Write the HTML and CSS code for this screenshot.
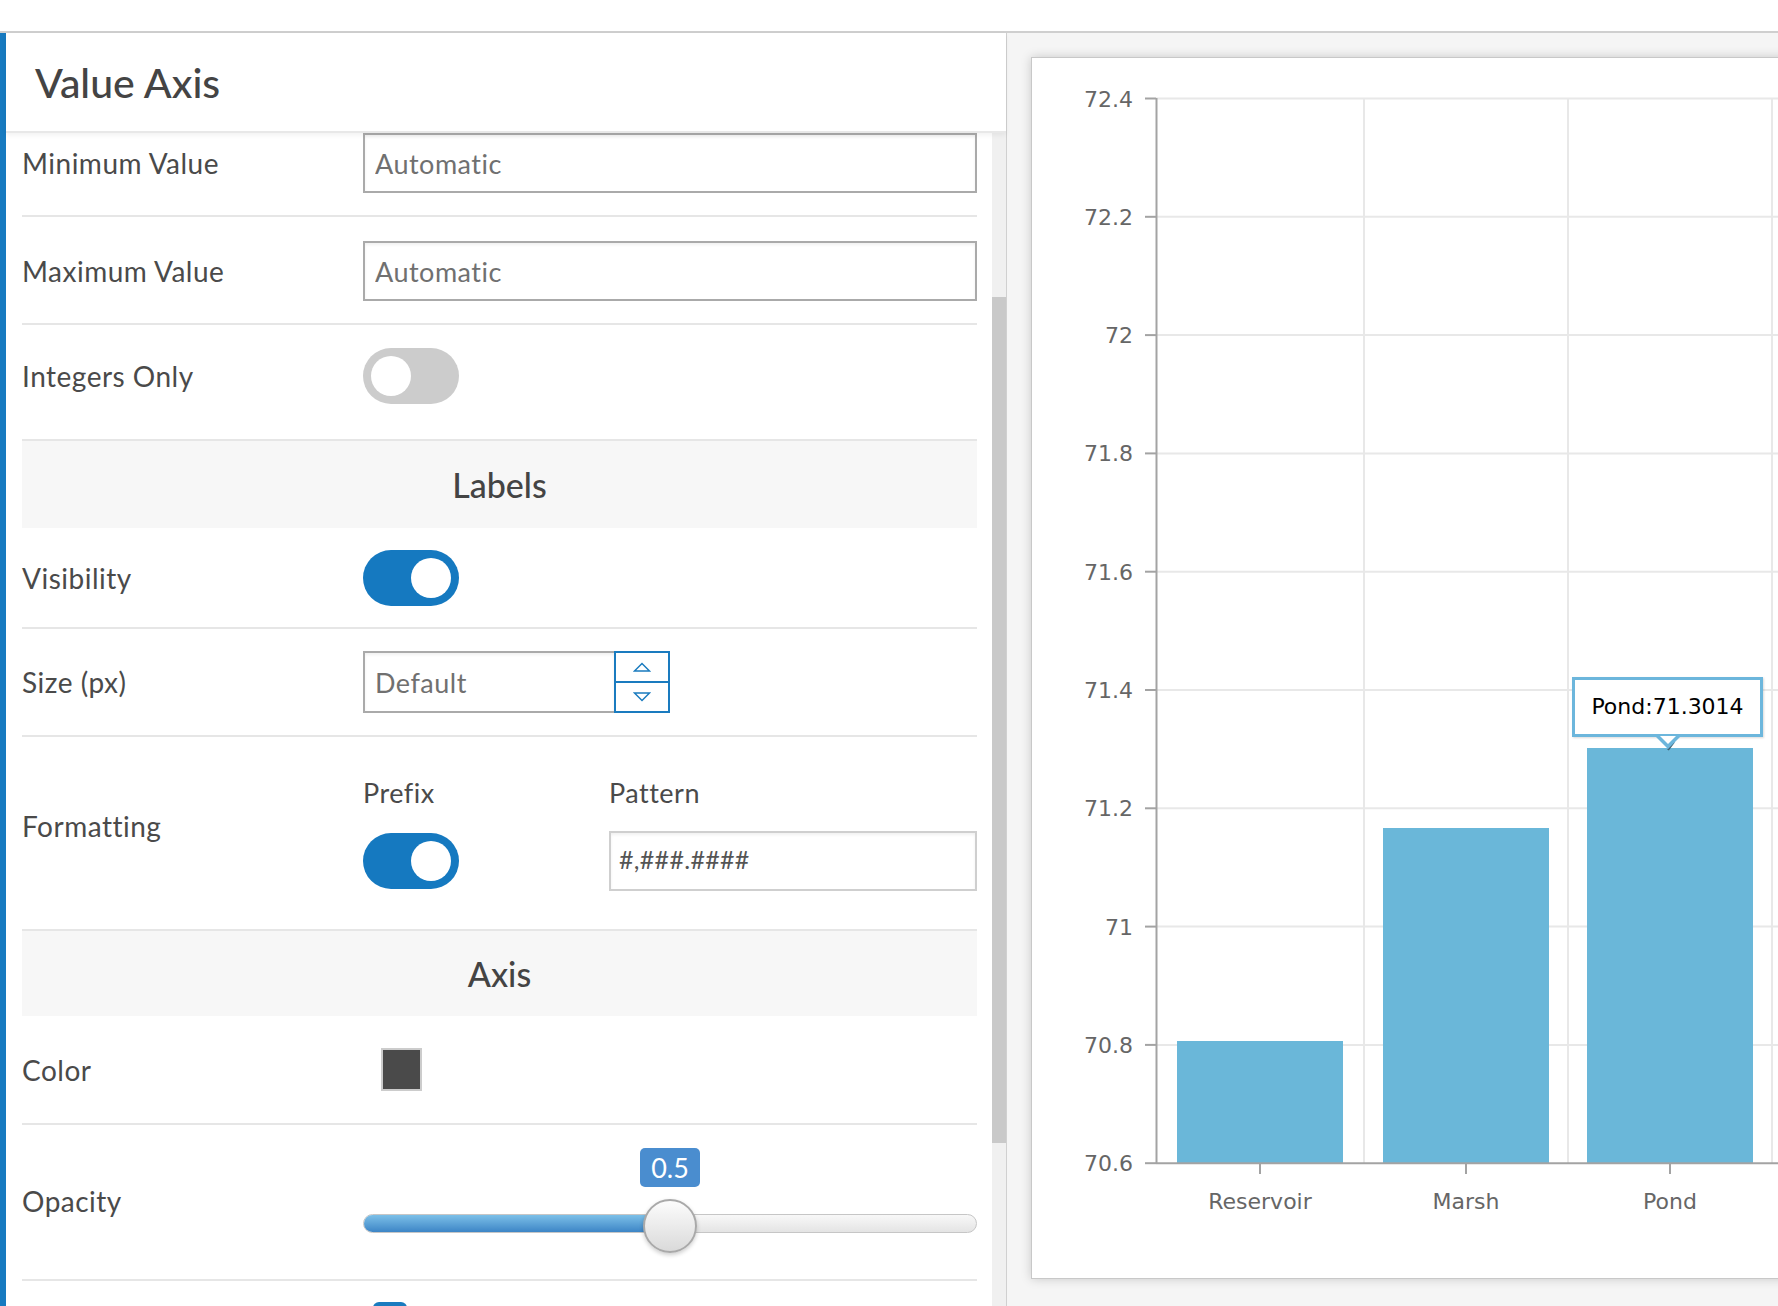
FILE: index.html
```html
<!DOCTYPE html>
<html lang="en">
<head>
    <meta charset="UTF-8">
    <meta name="viewport" content="width=device-width, initial-scale=1.0">
    <title>Value Axis - Chart Settings</title>
    <link rel="stylesheet" href="styles.css">
</head>
<body>
    <!-- Top bar -->
    <div class="topbar"></div>

    <div class="workspace">
        <div class="edge"></div>

        <!-- Settings panel -->
        <aside class="panel">
            <div class="panel-header">
                <h1>Value Axis</h1>
            </div>
            <div class="panel-body">
                <div class="settings">
                    <div class="settings-list">
                        <div class="row">
                            <label class="row-label">Minimum Value</label>
                            <div class="row-control">
                                <input class="text-input" type="text" placeholder="Automatic">
                            </div>
                        </div>
                        <div class="row">
                            <label class="row-label">Maximum Value</label>
                            <div class="row-control">
                                <input class="text-input" type="text" placeholder="Automatic">
                            </div>
                        </div>
                        <div class="row row-toggle-first">
                            <label class="row-label">Integers Only</label>
                            <div class="row-control">
                                <span class="toggle"><span class="knob"></span></span>
                            </div>
                        </div>

                        <div class="section">Labels</div>

                        <div class="row row-toggle">
                            <label class="row-label">Visibility</label>
                            <div class="row-control">
                                <span class="toggle on"><span class="knob"></span></span>
                            </div>
                        </div>
                        <div class="row row-size">
                            <label class="row-label">Size (px)</label>
                            <div class="row-control">
                                <div class="number-field">
                                    <input class="text-input" type="text" placeholder="Default">
                                    <div class="spinner">
                                        <button class="spin-btn spin-up">
                                            <svg width="18" height="10" viewBox="0 0 18 10"><path d="M1.5 9 L9 1.5 L16.5 9 Z" fill="none" stroke="#1a7bbf" stroke-width="1.5"/></svg>
                                        </button>
                                        <button class="spin-btn">
                                            <svg width="18" height="10" viewBox="0 0 18 10"><path d="M1.5 1 L9 8.5 L16.5 1 Z" fill="none" stroke="#1a7bbf" stroke-width="1.5"/></svg>
                                        </button>
                                    </div>
                                </div>
                            </div>
                        </div>
                        <div class="row row-format">
                            <label class="row-label">Formatting</label>
                            <div class="row-control format-grid">
                                <div class="format-col prefix-col">
                                    <div class="caption">Prefix</div>
                                    <div class="format-field">
                                        <span class="toggle on"><span class="knob"></span></span>
                                    </div>
                                </div>
                                <div class="format-col pattern-col">
                                    <div class="caption">Pattern</div>
                                    <div class="format-field">
                                        <input class="text-input pattern-input" type="text" value="#,###.####">
                                    </div>
                                </div>
                            </div>
                        </div>

                        <div class="section section-axis">Axis</div>

                        <div class="row row-color">
                            <label class="row-label">Color</label>
                            <div class="row-control">
                                <span class="swatch"></span>
                            </div>
                        </div>
                        <div class="row row-slider">
                            <label class="row-label">Opacity</label>
                            <div class="row-control">
                                <div class="slider">
                                    <span class="slider-value">0.5</span>
                                    <div class="slider-track">
                                        <div class="slider-fill" style="width: 50%"></div>
                                    </div>
                                    <span class="slider-thumb" style="left: calc(50% - 27px)"></span>
                                </div>
                            </div>
                        </div>
                        <div class="row row-next">
                            <label class="row-label"></label>
                            <div class="row-control">
                                <span class="checkbox"></span>
                            </div>
                        </div>
                    </div>
                </div>
                <div class="scrollbar"><div class="scroll-thumb"></div></div>
            </div>
        </aside>

        <!-- Chart preview -->
        <main class="preview">
            <div class="chart-card">
                <svg class="chart" width="780" height="1220" viewBox="0 0 780 1220">
                    <g class="grid">
                        <line x1="124" y1="40.5" x2="780" y2="40.5"/>
                        <line x1="124" y1="158.8" x2="780" y2="158.8"/>
                        <line x1="124" y1="277.1" x2="780" y2="277.1"/>
                        <line x1="124" y1="395.4" x2="780" y2="395.4"/>
                        <line x1="124" y1="513.7" x2="780" y2="513.7"/>
                        <line x1="124" y1="632" x2="780" y2="632"/>
                        <line x1="124" y1="750.3" x2="780" y2="750.3"/>
                        <line x1="124" y1="868.6" x2="780" y2="868.6"/>
                        <line x1="124" y1="986.9" x2="780" y2="986.9"/>
                        <line x1="332" y1="40.5" x2="332" y2="1105"/>
                        <line x1="536" y1="40.5" x2="536" y2="1105"/>
                        <line x1="740" y1="40.5" x2="740" y2="1105"/>
                    </g>
                    <g class="bars">
                        <rect x="145" y="983" width="166" height="122"/>
                        <rect x="351" y="770" width="166" height="335"/>
                        <rect x="555" y="690" width="166" height="415"/>
                    </g>
                    <g class="axis">
                        <line x1="124.5" y1="40" x2="124.5" y2="1106"/>
                        <line x1="124" y1="1105.2" x2="780" y2="1105.2"/>
                        <line x1="113" y1="40.5" x2="124" y2="40.5"/>
                        <line x1="113" y1="158.8" x2="124" y2="158.8"/>
                        <line x1="113" y1="277.1" x2="124" y2="277.1"/>
                        <line x1="113" y1="395.4" x2="124" y2="395.4"/>
                        <line x1="113" y1="513.7" x2="124" y2="513.7"/>
                        <line x1="113" y1="632" x2="124" y2="632"/>
                        <line x1="113" y1="750.3" x2="124" y2="750.3"/>
                        <line x1="113" y1="868.6" x2="124" y2="868.6"/>
                        <line x1="113" y1="986.9" x2="124" y2="986.9"/>
                        <line x1="113" y1="1105.2" x2="124" y2="1105.2"/>
                        <line x1="228" y1="1105" x2="228" y2="1116"/>
                        <line x1="434" y1="1105" x2="434" y2="1116"/>
                        <line x1="638" y1="1105" x2="638" y2="1116"/>
                    </g>
                    <g class="y-labels">
                        <text x="101" y="48.5">72.4</text>
                        <text x="101" y="166.8">72.2</text>
                        <text x="101" y="285.1">72</text>
                        <text x="101" y="403.4">71.8</text>
                        <text x="101" y="521.7">71.6</text>
                        <text x="101" y="640">71.4</text>
                        <text x="101" y="758.3">71.2</text>
                        <text x="101" y="876.6">71</text>
                        <text x="101" y="994.9">70.8</text>
                        <text x="101" y="1113.2">70.6</text>
                    </g>
                    <g class="x-labels">
                        <text x="228" y="1151">Reservoir</text>
                        <text x="434" y="1151">Marsh</text>
                        <text x="638" y="1151">Pond</text>
                    </g>
                    <!-- pointer shadow under the tooltip tip -->
                    <line class="tip-shadow" x1="636" y1="692" x2="642" y2="684"/>
                </svg>
                <div class="tooltip">Pond:71.3014</div>
            </div>
        </main>
    </div>
</body>
</html>
```

FILE: styles.css
```css
* {
    margin: 0;
    padding: 0;
    box-sizing: border-box;
}

body {
    font-family: Lato, "Open Sans", sans-serif;
    color: #444;
    background-color: #fff;
    width: 1778px;
    height: 1306px;
    overflow: hidden;
}

.topbar {
    height: 33px;
    border-bottom: 2px solid #cfcfcf;
}

.workspace {
    display: flex;
    height: 1273px;
}

.edge {
    width: 6px;
    background-color: #177ac0;
}

/* Settings panel */
.panel {
    width: 1001px;
    display: flex;
    flex-direction: column;
    border-right: 1px solid #d0d0d0;
    background-color: #fff;
}

.panel-header {
    position: relative;
    z-index: 1;
    height: 100px;
    display: flex;
    align-items: center;
    padding-left: 29px;
    background-color: #fff;
    border-bottom: 2px solid #e8e8e8;
    box-shadow: 0 2px 5px rgba(0, 0, 0, 0.06);
}

.panel-header h1 {
    font-size: 41px;
    font-weight: 500;
    color: #444;
}

.panel-body {
    flex: 1;
    display: flex;
    overflow: hidden;
}

.settings {
    flex: 1;
    padding: 0 15px 0 16px;
    overflow: hidden;
}

.settings-list {
    margin-top: -24px;
}

.scrollbar {
    width: 14px;
    padding-top: 164px;
    background-color: #f0f0f0;
}

.scroll-thumb {
    height: 846px;
    background-color: #c9c9c9;
}

/* Rows */
.row {
    display: flex;
    align-items: center;
    padding: 24px 0 22px;
    border-bottom: 2px solid #e6e6e6;
}

.row-label {
    width: 341px;
    flex-shrink: 0;
    font-size: 28px;
    letter-spacing: 0.5px;
    color: #4a4a4a;
}

.row-control {
    flex: 1;
}

.row-toggle-first {
    padding: 23px 0 35px;
}

.row-toggle {
    padding: 22px 0 21px;
}

.row-size {
    padding: 22px 0 22px;
}

.row-format {
    padding: 38px 0 38px;
}

.row-format .row-label {
    margin-bottom: 14px;
}

.row-color {
    padding: 32px 0 32px;
}

.row-slider {
    padding: 23px 0 26px;
}

.row-next {
    padding: 21px 0 0;
    border-bottom: none;
}

.section {
    height: 87px;
    display: flex;
    align-items: center;
    justify-content: center;
    background-color: #f7f7f7;
    font-size: 34px;
    font-weight: 500;
    color: #444;
}

.section-axis {
    height: 85px;
}

/* Inputs */
.text-input {
    display: block;
    width: 100%;
    height: 60px;
    padding: 0 10px;
    border: 2px solid #aaa;
    font-family: Lato, "Open Sans", sans-serif;
    font-size: 27px;
    letter-spacing: 0.5px;
    color: #555;
    background-color: #fff;
    box-shadow: inset 0 2px 3px rgba(0, 0, 0, 0.06);
    outline: none;
}

.text-input::placeholder {
    color: #707070;
}

.number-field {
    display: flex;
    width: 307px;
    height: 62px;
}

.number-field .text-input {
    width: 251px;
    height: 62px;
    border-right: none;
}

.spinner {
    width: 56px;
    display: flex;
    flex-direction: column;
    border: 2px solid #1a7bbf;
}

.spin-btn {
    flex: 1;
    display: flex;
    align-items: center;
    justify-content: center;
    background-color: #fff;
    border: none;
}

.spin-up {
    border-bottom: 2px solid #1a7bbf;
}

/* Toggle switch */
.toggle {
    display: block;
    position: relative;
    width: 96px;
    height: 56px;
    border-radius: 28px;
    background-color: #ccc;
}

.toggle .knob {
    position: absolute;
    top: 8px;
    left: 8px;
    width: 40px;
    height: 40px;
    border-radius: 50%;
    background-color: #fff;
}

.toggle.on {
    background-color: #1579c0;
}

.toggle.on .knob {
    left: 48px;
}

/* Formatting */
.format-grid {
    display: flex;
}

.prefix-col {
    width: 246px;
}

.pattern-col {
    flex: 1;
}

.caption {
    height: 36px;
    line-height: 36px;
    margin-bottom: 20px;
    font-size: 27px;
    letter-spacing: 0.5px;
    color: #4a4a4a;
}

.format-field {
    height: 60px;
    display: flex;
    align-items: center;
}

.pattern-input {
    border-color: #cfcfcf;
    font-size: 25px;
    letter-spacing: 0.3px;
    color: #555;
    padding: 0 8px 5px;
}

/* Color */
.swatch {
    display: block;
    width: 41px;
    height: 43px;
    margin-left: 18px;
    border: 2px solid #ccc;
    background-color: #4a4a4a;
}

/* Slider */
.slider {
    position: relative;
    height: 105px;
    padding-top: 66px;
}

.slider-track {
    height: 19px;
    border-radius: 10px;
    border: 1px solid #c6c6c6;
    background: linear-gradient(#f8f8f8, #e4e4e4);
    overflow: hidden;
}

.slider-fill {
    height: 100%;
    background: linear-gradient(#7cc0e8, #3d85c6);
}

.slider-thumb {
    position: absolute;
    top: 51px;
    width: 54px;
    height: 54px;
    border-radius: 50%;
    border: 2px solid #a9a9a9;
    background: linear-gradient(#fcfcfc, #dadada);
    box-shadow: 0 2px 4px rgba(0, 0, 0, 0.2);
}

.slider-value {
    position: absolute;
    top: 0;
    left: calc(50% - 30px);
    width: 60px;
    height: 39px;
    line-height: 39px;
    border-radius: 5px;
    background-color: #4a8dcf;
    color: #fff;
    font-size: 27px;
    text-align: center;
}

.checkbox {
    display: block;
    width: 34px;
    height: 34px;
    margin-left: 10px;
    border-radius: 6px;
    background-color: #1a7bbf;
}

/* Chart preview */
.preview {
    flex: 1;
    padding: 24px 0 0 24px;
    background-color: #f5f5f5;
    overflow: hidden;
}

.chart-card {
    position: relative;
    width: 780px;
    height: 1222px;
    background-color: #fff;
    border: 1px solid #c8c8c8;
    box-shadow: 0 0 10px rgba(0, 0, 0, 0.18);
}

.chart {
    display: block;
}

.chart .grid line {
    stroke: #e8e8e8;
    stroke-width: 2;
}

.chart .bars rect {
    fill: #6ab7d9;
}

.chart .axis line {
    stroke: #a3a3a3;
    stroke-width: 2;
}

.chart .tip-shadow {
    stroke: #3d5f70;
    stroke-width: 2;
}

.chart text {
    font-family: "DejaVu Sans", Verdana, sans-serif;
    font-size: 22px;
    fill: #666;
}

.chart .y-labels text {
    text-anchor: end;
}

.chart .x-labels text {
    text-anchor: middle;
}

.tooltip {
    position: absolute;
    left: 540px;
    top: 619px;
    width: 191px;
    height: 60px;
    line-height: 54px;
    text-align: center;
    background-color: #fff;
    border: 3px solid #6cb6dc;
    box-shadow: 1px 1px 2px rgba(0, 0, 0, 0.15);
    font-family: "DejaVu Sans", Verdana, sans-serif;
    font-size: 22px;
    color: #000;
}

.tooltip::before,
.tooltip::after {
    content: "";
    position: absolute;
    left: 50%;
    border-style: solid;
    border-color: transparent;
}

.tooltip::before {
    bottom: -15px;
    margin-left: -12px;
    border-width: 12px 12px 0;
    border-top-color: #6cb6dc;
}

.tooltip::after {
    bottom: -10px;
    margin-left: -8px;
    border-width: 8px 8px 0;
    border-top-color: #fff;
}
```
